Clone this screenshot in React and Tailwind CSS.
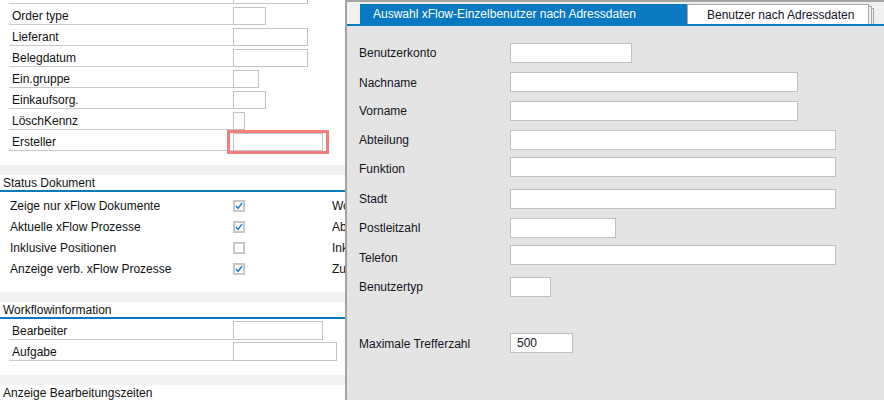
import React from 'react';

const font = { fontFamily: '"Liberation Sans", Arial, sans-serif' };

const topRows = [
  { label: 'Order type', w: 'w-[33px]' },
  { label: 'Lieferant', w: 'w-[75px]' },
  { label: 'Belegdatum', w: 'w-[75px]' },
  { label: 'Ein.gruppe', w: 'w-[26px]' },
  { label: 'Einkaufsorg.', w: 'w-[33px]' },
  { label: 'LöschKennz', w: 'w-[12px]' },
];

const checks = [
  { label: 'Zeige nur xFlow Dokumente', on: true, right: 'Workflowstatus' },
  { label: 'Aktuelle xFlow Prozesse', on: true, right: 'Abgeschlossene Prozesse' },
  { label: 'Inklusive Positionen', on: false, right: 'Inklusive Historie' },
  { label: 'Anzeige verb. xFlow Prozesse', on: true, right: 'Zuordnung' },
];

const dialogRows = [
  { label: 'Benutzerkonto', w: 'w-[122px]', mt: 'mt-[17px]', lp: '' },
  { label: 'Nachname', w: 'w-[288px]', mt: 'mt-[9px]', lp: 'pt-[2px]' },
  { label: 'Vorname', w: 'w-[288px]', mt: 'mt-[9px]', lp: '' },
  { label: 'Abteilung', w: 'w-[326px]', mt: 'mt-[9px]', lp: '' },
  { label: 'Funktion', w: 'w-[326px]', mt: 'mt-[7px]', lp: 'pt-[4px]' },
  { label: 'Stadt', w: 'w-[326px]', mt: 'mt-[12px]', lp: '' },
  { label: 'Postleitzahl', w: 'w-[106px]', mt: 'mt-[9px]', lp: '' },
  { label: 'Telefon', w: 'w-[326px]', mt: 'mt-[7px]', lp: 'pt-[5px]' },
  { label: 'Benutzertyp', w: 'w-[41px]', mt: 'mt-[12px]', lp: '' },
  { label: 'Maximale Trefferzahl', w: 'w-[63px]', mt: 'mt-[36px]', lp: 'pt-[2px]', value: '500' },
];

const FieldRow = ({ label, children }) => (
  <div className="flex h-[21px] items-end">
    <div className="ml-[9px] flex h-full w-[224px] shrink-0 items-center border-b border-[#c9c9c9] pl-[3px] pt-[3px]">
      {label}
    </div>
    {children}
  </div>
);

const Box = ({ w, h = 'h-[18px]' }) => (
  <div className={`${w} ${h} shrink-0 border border-[#c2c2c2] bg-white`} />
);

const Check = ({ on }) => (
  <div className="flex h-[12px] w-[12px] shrink-0 items-center justify-center border-2 border-[#c8c8c8] bg-white">
    {on && (
      <svg width="10" height="10" viewBox="0 0 10 10">
        <path d="M1.2 5 L3.8 8 L8.8 1.2" fill="none" stroke="#1b82cc" strokeWidth="1.8" />
      </svg>
    )}
  </div>
);

const SectionHead = ({ title, mt }) => (
  <>
    <div className={`${mt} h-[10px] bg-[#f2f2f2]`} />
    <div className="h-[17px] border-b-2 border-[#0a79c2] pl-[3px] pt-[1px] leading-[15px]">{title}</div>
  </>
);

const LeftPanel = () => (
  <div className="h-[400px] w-[345px] shrink-0 overflow-hidden bg-white text-[12px] text-[#111]">
    <div className="flex h-[4px] items-end">
      <div className="ml-[9px] h-full w-[224px] border-b border-[#c9c9c9]" />
      <div className="h-[4px] w-[75px] border-x border-b border-[#c2c2c2]" />
    </div>
    {topRows.map((r) => (
      <FieldRow key={r.label} label={r.label}>
        <Box w={r.w} />
      </FieldRow>
    ))}
    <FieldRow label="Ersteller">
      <div className="-mb-[3px] -ml-[6px] shrink-0 border-[3px] border-[#f47e7e] px-[3px]">
        <Box w="w-[90px]" />
      </div>
    </FieldRow>

    <SectionHead title="Status Dokument" mt="mt-[14px]" />
    <div className="pt-[3px]">
      {checks.map((c) => (
        <div key={c.label} className="flex h-[21px] items-center whitespace-nowrap pt-[1px]">
          <div className="w-[233px] shrink-0 pl-[10px]">{c.label}</div>
          <Check on={c.on} />
          {/* the dialog covers the rest of this column */}
          <div className="ml-[87px] w-[13px] shrink-0 overflow-hidden">{c.right}</div>
        </div>
      ))}
    </div>

    <SectionHead title="Workflowinformation" mt="mt-[13px]" />
    <FieldRow label="Bearbeiter">
      <Box w="w-[90px]" h="h-[19px]" />
    </FieldRow>
    <FieldRow label="Aufgabe">
      <Box w="w-[104px]" h="h-[19px]" />
    </FieldRow>

    <SectionHead title="Anzeige Bearbeitungszeiten" mt="mt-[14px]" />
  </div>
);

const Dialog = () => (
  <div className="flex h-[400px] flex-1 flex-col border-l-2 border-t-2 border-[#a3a3a3] bg-[#e4e4e4] text-[12px] text-[#14141f]">
    <div className="flex h-[24px] items-end border-b-2 border-[#0a79c2] bg-[#f0f0f0] pl-[13px]">
      <div className="flex h-[20px] w-[327px] items-center bg-[#0a79c2] pl-[13px] text-white">
        Auswahl xFlow-Einzelbenutzer nach Adressdaten
      </div>
      <div className="flex h-[20px] w-[182px] items-center border-x border-t border-[#a7a7a7] bg-white pl-[19px]">
        Benutzer nach Adressdaten
      </div>
      <div className="h-[18px] w-[3px] border-r border-t border-[#a7a7a7]" />
      <div className="h-[16px] w-[2px] border-r border-t border-[#a7a7a7]" />
    </div>
    <div className="flex flex-col pl-[12px]">
      {dialogRows.map((r) => (
        <div key={r.label} className={`${r.mt} flex h-[20px] items-center`}>
          <div className={`${r.lp} w-[151px] shrink-0`}>{r.label}</div>
          <div className={`${r.w} flex h-[20px] items-center border border-[#bfbfbf] bg-white pl-[6px]`}>
            {r.value}
          </div>
        </div>
      ))}
    </div>
  </div>
);

export default function App() {
  return (
    <div className="flex h-[400px] w-[884px] overflow-hidden bg-white" style={font}>
      <LeftPanel />
      <Dialog />
    </div>
  );
}
